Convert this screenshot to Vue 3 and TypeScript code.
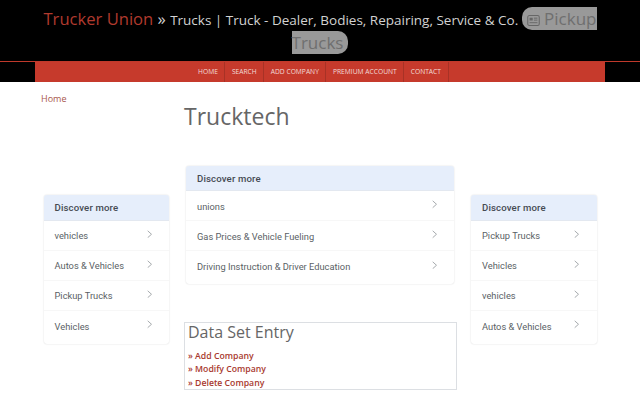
<script setup lang="ts">
interface Card { items: string[] }
const left: Card = { items: ['vehicles', 'Autos & Vehicles', 'Pickup Trucks', 'Vehicles'] }
const center: Card = { items: ['unions', 'Gas Prices & Vehicle Fueling', 'Driving Instruction & Driver Education'] }
const right: Card = { items: ['Pickup Trucks', 'Vehicles', 'vehicles', 'Autos & Vehicles'] }
const nav = ['HOME', 'SEARCH', 'ADD COMPANY', 'PREMIUM ACCOUNT', 'CONTACT']
const links = ['Add Company', 'Modify Company', 'Delete Company']
</script>

<template>
  <div class="page">
    <header class="head">
      <div class="title">
        <span class="brand">Trucker Union</span>
        <span class="raquo"> » </span>
        <span class="tag">Trucks | Truck - Dealer, Bodies, Repairing, Service &amp; Co. </span>
        <span class="pill"><svg class="news" viewBox="0 0 16 14" width="13" height="11"><rect x="0.7" y="0.7" width="14.6" height="12.6" rx="2" fill="none" stroke="#666" stroke-width="1.3"/><rect x="3" y="3.5" width="4" height="3.5" fill="#666"/><path d="M8.5 4h4.5M8.5 6.5h4.5M3 9.8h10" stroke="#666" stroke-width="1.2"/></svg> Pickup Trucks</span>
      </div>
    </header>
    <div class="navwrap">
      <nav class="nav">
        <a v-for="n in nav" :key="n" class="navitem">{{ n }}</a>
      </nav>
    </div>
    <div class="crumb">Home</div>
    <main class="cols">
      <aside class="side">
        <section class="card">
          <h3 class="cardhead">Discover more</h3>
          <div v-for="i in left.items" :key="i" class="row">
            <span>{{ i }}</span>
            <svg class="chev" viewBox="0 0 8 12" width="5.5" height="8.5"><path d="M1 1l5.5 5L1 11" fill="none" stroke="#8a8f94" stroke-width="1.1"/></svg>
          </div>
        </section>
      </aside>
      <div class="mid">
        <h1 class="h1">Trucktech</h1>
        <section class="card midcard">
          <h3 class="cardhead">Discover more</h3>
          <div v-for="i in center.items" :key="i" class="row">
            <span>{{ i }}</span>
            <svg class="chev" viewBox="0 0 8 12" width="5.5" height="8.5"><path d="M1 1l5.5 5L1 11" fill="none" stroke="#8a8f94" stroke-width="1.1"/></svg>
          </div>
        </section>
        <section class="entry">
          <h2 class="entryhead">Data Set Entry</h2>
          <a v-for="l in links" :key="l" class="entrylink">» {{ l }}</a>
        </section>
      </div>
      <aside class="side">
        <section class="card">
          <h3 class="cardhead">Discover more</h3>
          <div v-for="i in right.items" :key="i" class="row">
            <span>{{ i }}</span>
            <svg class="chev" viewBox="0 0 8 12" width="5.5" height="8.5"><path d="M1 1l5.5 5L1 11" fill="none" stroke="#8a8f94" stroke-width="1.1"/></svg>
          </div>
        </section>
      </aside>
    </main>
  </div>
</template>

<style>
html, body { margin: 0; background: #fff; overflow: hidden; }
</style>

<style scoped>
.page { width: 640px; height: 400px; overflow: hidden; font-family: "Open Sans", sans-serif; background: #fff; }
.head { background: #000; height: 61px; box-sizing: border-box; padding: 8px 35px 0; text-align: center; }
.title { line-height: 21.5px; font-size: 13.5px; color: #d2d2d2; }
.brand { font-size: 16.6px; color: #b03a2e; }
.raquo { font-size: 16.6px; color: #d2d2d2; }
.pill { font-size: 17px; color: #6f6f6f; background: #999; border-radius: 10px; padding: 0 5px; -webkit-box-decoration-break: slice; box-decoration-break: slice; }
.news { vertical-align: -1px; }
.navwrap { background: #000; border-top: 1px solid #c0392b; height: 20px; }
.nav { margin: 0 35px; height: 20px; background: #c63a2c; display: flex; justify-content: center; }
.navitem { font-size: 6.7px; line-height: 20px; color: #f2dcd8; padding: 0 6.5px; border-right: 1px solid #a83226; }
.crumb { font-size: 9px; line-height: 14px; color: #a8564b; padding: 10px 0 0 41px; }
.cols { display: flex; align-items: flex-start; padding-left: 43.5px; margin-top: -4px; }
.side { width: 125.5px; flex: none; padding-top: 93px; }
.side .cardhead { height: 26px; line-height: 25px; }
.mid { width: 273px; margin: 0 14px 0 15px; flex: none; }
.h1 { margin: 0; font-size: 23px; line-height: 28px; font-weight: 400; color: #666; }
.card { background: #fff; border-radius: 3px; box-shadow: 0 0 1.5px rgba(0,0,0,.2); font-family: Roboto, sans-serif; overflow: hidden; padding-bottom: 3px; }
.midcard { margin: 36px 3px 0 2px; }
.midcard .row { padding-top: 1px; }
.cardhead { margin: 0; height: 25px; line-height: 25px; padding: 0 11px; background: #e6eefb; font-size: 9.6px; font-weight: 500; color: #454a52; letter-spacing: .15px; box-sizing: border-box; border-bottom: 1px solid #e3e8f0; }
.row { height: 30px; display: flex; align-items: center; justify-content: space-between; padding: 0 17px 0 11px; font-size: 9.3px; color: #5a5f65; border-bottom: 1px solid #f7f7f7; box-sizing: border-box; }
.row:last-child { border-bottom: 0; }
.chev { margin-top: -3px; }
.entry { margin-top: 38px; height: 68px; box-sizing: border-box; border: 1px solid #dcdfe3; padding: 0 3px; }
.entryhead { margin: 0 0 9px; font-size: 16px; line-height: 18px; font-weight: 400; color: #666; }
.entrylink { display: block; font-size: 8.7px; line-height: 13.3px; font-weight: 600; color: #a8392e; }
</style>
